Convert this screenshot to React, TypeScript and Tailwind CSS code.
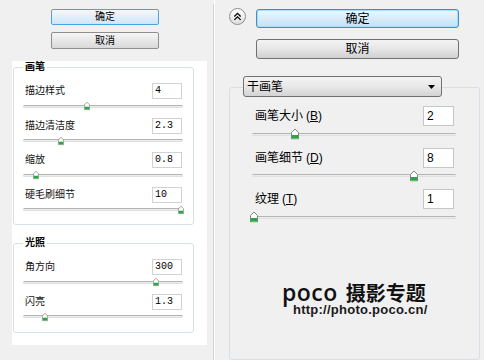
import React from 'react';

interface SliderRow {
  label: string;
  value: string;
  pos: number;
  hotkey?: string;
}

const brushRows: SliderRow[] = [
  { label: '描边样式', value: '4', pos: 40 },
  { label: '描边清洁度', value: '2.3', pos: 23.8 },
  { label: '缩放', value: '0.8', pos: 8 },
  { label: '硬毛刷细节', value: '10', pos: 99 },
];

const lightRows: SliderRow[] = [
  { label: '角方向', value: '300', pos: 83 },
  { label: '闪亮', value: '1.3', pos: 14 },
];

const dryBrushRows: SliderRow[] = [
  { label: '画笔大小', hotkey: 'B', value: '2', pos: 21 },
  { label: '画笔细节', hotkey: 'D', value: '8', pos: 79.4 },
  { label: '纹理', hotkey: 'T', value: '1', pos: 1 },
];

const Thumb = ({ pos, small }: { pos: number; small?: boolean }) => (
  <svg
    viewBox="0 0 8 11"
    className={`absolute top-1/2 -translate-x-1/2 -translate-y-1/2 ${small ? 'w-[6px] h-[9px]' : 'w-[8px] h-[11px]'}`}
    style={{ left: `${pos}%` }}
  >
    <path d="M4 0.5 L7.5 4 V10.5 H0.5 V4 Z" fill="#ffffff" stroke="#7c8a7c" strokeWidth="1" />
    <rect x="1" y="6.5" width="6" height="3.5" fill="#27a844" />
  </svg>
);

const Track = ({ pos, small }: { pos: number; small?: boolean }) => (
  <div className="relative flex items-center h-[8px]">
    <div className="w-full h-[3px] rounded-full bg-[#ececec] border-t border-[#b4b4b4] border-b border-b-[#e0e0e0]" />
    <Thumb pos={pos} small={small} />
  </div>
);

const LeftRow = ({ row }: { row: SliderRow }) => (
  <div className="h-[34.5px]">
    <div className="flex items-center justify-between h-[16px]">
      <span className="text-[10px] leading-none text-[#111]">{row.label}</span>
      <div className="w-[30px] h-[16px] bg-white border border-[#cfd3d7] px-[2px] flex items-center text-[10px] font-['Liberation_Mono',monospace] leading-none">
        {row.value}
      </div>
    </div>
    <div className="mt-[3px] -ml-[2px] -mr-[1px]">
      <Track pos={row.pos} small />
    </div>
  </div>
);

const LeftGroup = ({ title, rows, height }: { title: string; rows: SliderRow[]; height: string }) => (
  <div className={`ml-[1px] w-[181px] ${height} border border-[#d5dfe5] rounded-[3px]`}>
    <div className="-mt-[7px] ml-[9px] w-fit bg-white px-[2px] text-[10px] leading-[12px] font-bold">{title}</div>
    <div className="mt-[10px] px-[11px]">
      {rows.map((row) => (
        <LeftRow key={row.label} row={row} />
      ))}
    </div>
  </div>
);

const RightRow = ({ row }: { row: SliderRow }) => (
  <div className="h-[41.7px]">
    <div className="flex items-center justify-between h-[20px]">
      <span className="text-[12px] leading-none">
        {row.label}
        <span className="ml-[3px]">
          (<u>{row.hotkey}</u>)
        </span>
      </span>
      <div className="w-[31px] h-[20px] bg-white border border-[#c3c6ca] px-[3px] flex items-center text-[12px] leading-none">
        {row.value}
      </div>
    </div>
    <div className="mt-[4px] -ml-[3px] -mr-[2px]">
      <Track pos={row.pos} />
    </div>
  </div>
);

export default function App() {
  return (
    <div className="w-[484px] h-[360px] overflow-hidden flex bg-[#f0f0f0] text-black font-['Liberation_Sans','Noto_Sans_CJK_SC',sans-serif]">
      {/* left dialog */}
      <div className="w-[213px] shrink-0 pt-[9px]">
        <button className="ml-[51px] w-[108px] h-[16px] flex items-center justify-center rounded-[2px] border border-[#4aa3e0] bg-gradient-to-b from-[#f3f9fd] to-[#cfe5f5] text-[10px] leading-none">
          确定
        </button>
        <button className="mt-[7px] ml-[51px] w-[108px] h-[17px] flex items-center justify-center rounded-[2px] border border-[#8e8e8e] bg-gradient-to-b from-[#f6f6f6] to-[#d9d9d9] text-[10px] leading-none">
          取消
        </button>
        <div className="mt-[12px] ml-[12px] w-[195px] h-[284px] bg-white pt-[6px]">
          <LeftGroup title="画笔" rows={brushRows} height="h-[158px]" />
          <div className="h-[18px]" />
          <LeftGroup title="光照" rows={lightRows} height="h-[90px]" />
        </div>
      </div>

      {/* divider */}
      <div className="w-[1px] mt-[4px] bg-[#d3d3d3]" />
      <div className="w-[1px] bg-white" />

      {/* right dialog */}
      <div className="flex-1 flex flex-col">
        <div className="flex items-start pt-[8px] pl-[14px]">
          <div className="w-[17px] h-[17px] rounded-full border border-[#8c8c8c] bg-gradient-to-b from-white to-[#dedede] flex items-center justify-center">
            <svg viewBox="0 0 10 10" className="w-[9px] h-[9px]" fill="none" stroke="#000" strokeWidth="1.4">
              <path d="M1.5 5 L5 1.5 L8.5 5" />
              <path d="M1.5 8.8 L5 5.3 L8.5 8.8" />
            </svg>
          </div>
          <div className="ml-[10px] mt-[1px] flex flex-col gap-[11px]">
            <button className="w-[203px] h-[19px] flex items-center justify-center rounded-[3px] border border-[#3c8fd0] bg-gradient-to-b from-[#eef7fd] to-[#c2e1f5] shadow-[inset_0_0_0_1px_#a8dcf8] text-[12px] leading-none">
              确定
            </button>
            <button className="w-[203px] h-[20px] flex items-center justify-center rounded-[3px] border border-[#707070] bg-gradient-to-b from-[#f3f3f3] via-[#e6e6e6] to-[#d0d0d0] text-[12px] leading-none">
              取消
            </button>
          </div>
        </div>

        <div className="mt-[28px] ml-[14px] w-[251px] h-[276px] border border-[#d5dfe5] rounded-[3px]">
          <div className="-mt-[12px] ml-[13px] w-[199px] h-[21px] rounded-[3px] border border-[#707070] bg-gradient-to-b from-[#f3f3f3] via-[#e8e8e8] to-[#d3d3d3] flex items-center justify-between pl-[3px] pr-[6px]">
            <span className="text-[12px] leading-none">干画笔</span>
            <svg viewBox="0 0 7 4" className="w-[7px] h-[4px]">
              <path d="M0 0 H7 L3.5 4 Z" fill="#000" />
            </svg>
          </div>

          <div className="mt-[9px] pl-[25px] pr-[25px]">
            {dryBrushRows.map((row) => (
              <RightRow key={row.label} row={row} />
            ))}
          </div>

          {/* logo */}
          <div className="mt-[51px] ml-[52px]">
            <div className="flex items-baseline h-[20px]">
              <span className="text-[23px] leading-[20px] tracking-[0.5px] font-semibold font-['Open_Sans',sans-serif] text-[#111]">
                poco
              </span>
              <span className="ml-[8px] text-[20px] leading-[18px] font-bold font-['Noto_Sans_CJK_SC',sans-serif] text-[#111]">
                摄影专题
              </span>
            </div>
            <div className="mt-[2px] ml-[11px] text-[13px] leading-[12px] font-bold tracking-[0.25px] text-[#1a1a1a]">
              http://photo.poco.cn/
            </div>
          </div>
        </div>
      </div>
    </div>
  );
}
